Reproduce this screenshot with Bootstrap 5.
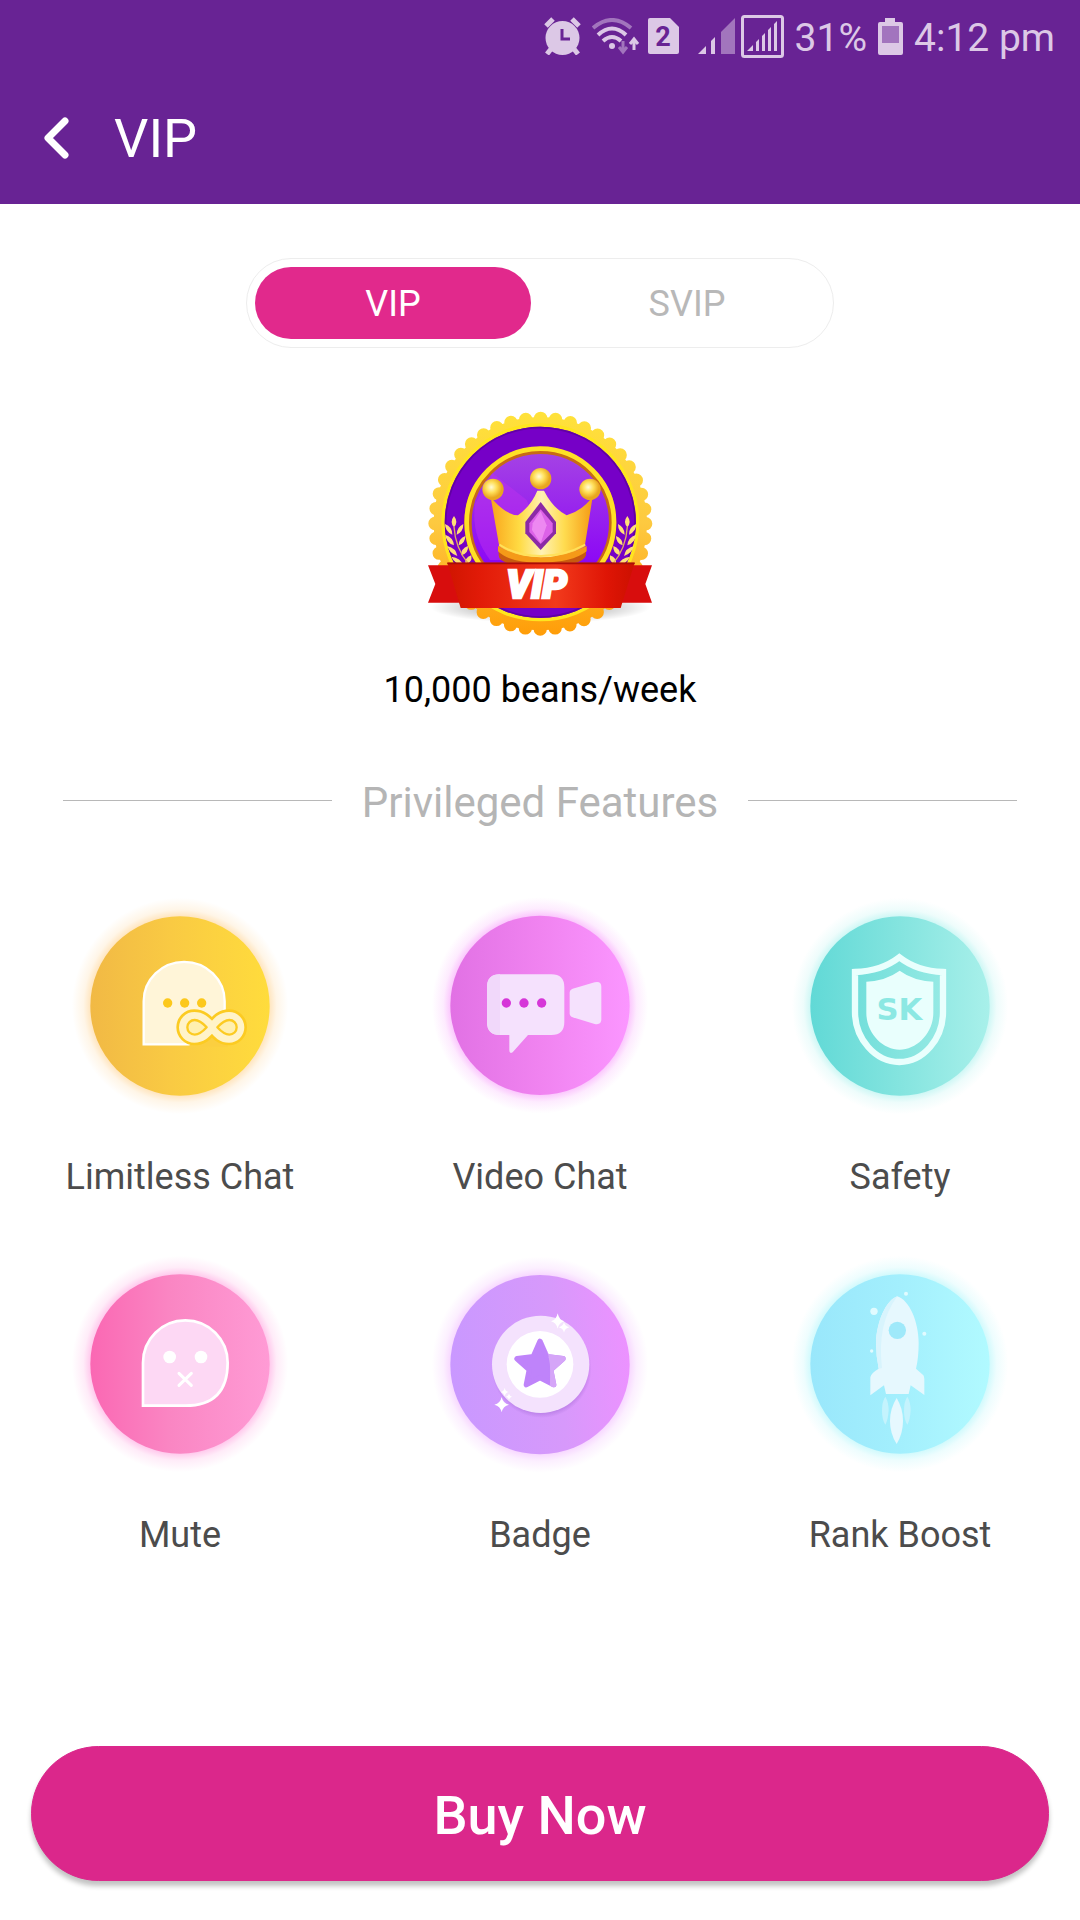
<!DOCTYPE html>
<html lang="en">
<head>
<meta charset="utf-8">
<meta name="viewport" content="width=device-width, initial-scale=1">
<title>VIP</title>
<link href="https://cdn.jsdelivr.net/npm/bootstrap@5.3.0/dist/css/bootstrap.min.css" rel="stylesheet">
<style>
  body { font-family: Roboto, "Liberation Sans", sans-serif; background: #fff; color: #000; }
  svg { display: block; flex: none; }
  .app-top { background: #682394; color: #fff; }
  .status-row { height: 72px; padding-right: 25px; gap: 11px; color: #dcc8e6; font-size: 39px; line-height: 48px; }
  .status-pair { gap: 6px; }
  .title-row { height: 132px; padding-left: 43px; gap: 43px; }
  .title-row h1 { padding-top: 2px; font-size: 54px; line-height: 64px; font-weight: 400; }
  .plan-switch { width: 588px; max-width: 100%; margin-top: 54px; padding: 8px; gap: 18px; border: 1px solid #ededed; border-radius: 45px; }
  .plan-switch .nav-link { height: 72px; padding: 0; border-radius: 36px; font-size: 36px; line-height: 74px; color: #b8b8b8; }
  .plan-switch .nav-link.active { background: #e1298c; color: #fff; }
  .vip-seal { margin-top: 52px; }
  .price { margin-top: 16px; font-size: 36px; line-height: 48px; }
  .divider { margin: 58px 0; padding: 0 63px; gap: 30px; }
  .divider h2 { padding-top: 6px; font-size: 42px; line-height: 50px; font-weight: 400; color: #b5b5b5; }
  .rule-line { height: 1px; background: #b8b8b8; }
  .features { row-gap: 43px; }
  .feature-name { margin-top: 27px; font-size: 36px; line-height: 48px; color: #4c4c4c; }
  .buy-area { padding: 48px 31px 39px; }
  .btn-buy { height: 135px; padding: 4px 0 0; border-radius: 68px; font-size: 54px; line-height: 64px; font-weight: 500; box-shadow: 0 5px 5px rgba(0,0,0,.24);
    --bs-btn-color: #fff; --bs-btn-bg: #db278b; --bs-btn-border-color: #db278b; --bs-btn-hover-color: #fff; --bs-btn-hover-bg: #c5207b; --bs-btn-hover-border-color: #c5207b; --bs-btn-active-color: #fff; --bs-btn-active-bg: #c5207b; }
</style>
<script src="https://cdn.jsdelivr.net/npm/bootstrap@5.3.0/dist/js/bootstrap.bundle.min.js" defer></script>
</head>
<body>
<div class="d-flex flex-column min-vh-100">

  <header class="app-top">
    <div class="status-row d-flex align-items-center justify-content-end">
      <svg width="37" height="38" viewBox="0 0 37 38" fill="currentColor" aria-hidden="true">
        <path d="M7 32l-4 5M30 32l4 5M2 9l7-7M35 9l-7-7" stroke="currentColor" stroke-width="5"/>
        <circle cx="18.500" cy="21" r="17"/>
        <path d="M18 12v10h8" fill="none" stroke="#682394" stroke-width="3"/>
      </svg>
      <div class="status-pair d-flex align-items-center me-2">
        <svg width="50" height="37" viewBox="0 0 50 37" fill="none" stroke="currentColor" stroke-width="4" aria-hidden="true">
          <path d="M1 10Q20-6 39 10" opacity=".5"/>
          <path d="M6 17Q20 4 34 17M11 23Q20 15 29 23"/>
          <circle cx="20" cy="28" r="3" fill="currentColor" stroke="none"/>
          <path d="M31 23v11M27 29l4 5 4-5" stroke-width="3" opacity=".5"/>
          <path d="M42 32V21M38 26l4-5 4 5" stroke-width="3"/>
        </svg>
        <svg width="31" height="36" viewBox="0 0 31 36" aria-hidden="true">
          <path d="M2 0h20l9 9v25q0 2-2 2H2q-2 0-2-2V2Q0 0 2 0z" fill="currentColor"/>
          <text x="15" y="28" text-anchor="middle" font-size="27" font-weight="700" fill="#682394">2</text>
        </svg>
      </div>
      <div class="status-pair d-flex align-items-center">
        <svg width="37" height="37" viewBox="0 0 37 37" fill="currentColor" aria-hidden="true">
          <path d="M0 36l8-8v8zM13 23l4-4v17h-4z"/>
          <path d="M23 14L37 0v36H23z" opacity=".5"/>
        </svg>
        <svg width="43" height="43" viewBox="0 0 43 43" fill="currentColor" aria-hidden="true">
          <rect x="1.500" y="1.500" width="40" height="40" rx="2" fill="none" stroke="currentColor" stroke-width="3"/>
          <path d="M6 36l6-6v6zM15 27l3-3v12h-3zM21 21l3-3v18h-3zM27 15l3-3v24h-3zM33 9l3-3v30h-3z"/>
        </svg>
      </div>
      <span class="pt-1">31%</span>
      <svg width="25" height="37" viewBox="0 0 25 37" aria-hidden="true">
        <path d="M2 4h5V0h10v4h6q2 0 2 2v29q0 2-2 2H2q-2 0-2-2V6Q0 4 2 4z" fill="currentColor"/>
        <path d="M4 8h17v17H4z" fill="#a274be"/>
      </svg>
      <span class="pt-1">4:12 pm</span>
    </div>
    <div class="title-row d-flex align-items-center">
      <button type="button" class="btn p-0 border-0 text-white" aria-label="Back">
        <svg width="28" height="44" viewBox="0 0 28 44" fill="none" stroke="currentColor" stroke-width="7" stroke-linecap="round" stroke-linejoin="round"><path d="M22 5L5 22l17 17"/></svg>
      </button>
      <h1 class="m-0">VIP</h1>
    </div>
  </header>

  <main class="flex-grow-1 d-flex flex-column align-items-center">
    <div class="plan-switch nav nav-pills nav-fill flex-nowrap" role="tablist">
      <button type="button" class="nav-link active w-50" role="tab" aria-selected="true">VIP</button>
      <button type="button" class="nav-link w-50" role="tab" aria-selected="false">SVIP</button>
    </div>

    <svg class="vip-seal" width="260" height="250" viewBox="0 0 780 750" role="img" aria-label="VIP seal">
      <defs>
        <linearGradient id="sealGold" gradientUnits="userSpaceOnUse" x1="0" y1="36" x2="0" y2="706"><stop offset="0" stop-color="#ffe23a"/><stop offset=".5" stop-color="#fdc940"/><stop offset="1" stop-color="#ff9d08"/></linearGradient>
        <linearGradient id="sealCore" x1="0" y1="0" x2="0" y2="1"><stop offset="0" stop-color="#a544e4"/><stop offset=".75" stop-color="#8d0af5"/><stop offset="1" stop-color="#6500bd"/></linearGradient>
        <linearGradient id="crownGold" x1="0" y1="0" x2="1" y2="0"><stop offset="0" stop-color="#f9a51c"/><stop offset=".28" stop-color="#ffdb43"/><stop offset=".5" stop-color="#fff2b4"/><stop offset=".72" stop-color="#ffdc50"/><stop offset="1" stop-color="#f59a14"/></linearGradient>
        <radialGradient id="pearl" cx=".42" cy=".4"><stop offset="0" stop-color="#fffbd6"/><stop offset=".5" stop-color="#ffdf59"/><stop offset="1" stop-color="#e9a61f"/></radialGradient>
        <linearGradient id="ribbonRed" x1="0" y1="0" x2="1" y2="0"><stop offset="0" stop-color="#d01500"/><stop offset=".18" stop-color="#e21b08"/><stop offset=".58" stop-color="#f23a1c"/><stop offset=".85" stop-color="#df1505"/><stop offset="1" stop-color="#cc1000"/></linearGradient>
        <radialGradient id="sealShade"><stop offset=".4" stop-color="#000" stop-opacity=".28"/><stop offset="1" stop-color="#000" stop-opacity="0"/></radialGradient>
        <g id="wheat" fill="#ffdf78">
          <path d="M132 348q-14 18 0 34 14-16 0-34zM105 372q0 22 22 32 0-24-22-32zM160 372q-20 10-20 32 20-8 20-32zM106 404q2 24 26 32-2-24-26-32zM166 408q-20 8-20 28 20-6 20-28zM112 438q6 22 30 30-4-24-30-30zM174 438q-22 8-20 28 22-6 20-28zM124 470q10 22 36 26-8-22-36-26zM184 466q-22 8-18 28 22-6 18-28z"/>
          <path d="M132 380q4 66 44 112" fill="none" stroke="#e5b15c" stroke-width="4"/>
        </g>
      </defs>
      <ellipse cx="391" cy="622" rx="330" ry="48" fill="url(#sealShade)"/>
      <circle cx="391" cy="371" r="320" fill="url(#sealGold)"/>
      <circle cx="391" cy="371" r="316" fill="none" stroke="url(#sealGold)" stroke-width="40" stroke-linecap="round" pathLength="44" stroke-dasharray="0 1"/>
      <circle cx="391" cy="367" r="292" fill="#7600c7" stroke="#ffe51f" stroke-width="10"/>
      <circle cx="391" cy="367" r="284" fill="none" stroke="#6200a4" stroke-width="5"/>
      <circle cx="391" cy="368" r="217" fill="url(#sealCore)" stroke="#c76b14" stroke-width="22"/>
      <circle cx="391" cy="367" r="221" fill="none" stroke="#ffe126" stroke-width="14"/>
      <path d="M196 310L248 220 350 300 420 480H240q-60-80-44-170z" fill="#c232ee" opacity=".45"/>
      <use href="#wheat"/><use href="#wheat" transform="translate(784 0) scale(-1 1)"/>
      <path d="M266 438q0 46 126 46t136-46v28q-10 34-136 34T266 466z" fill="#c85a10"/>
      <path d="M242 292Q286 344 324 346 364 316 382 272H402Q430 326 470 346 514 334 548 290L524 440Q466 474 392 474T268 440z" fill="url(#crownGold)"/>
      <path d="M264 438Q320 472 392 472T530 438v16q-44 34-138 34T264 454z" fill="#f59a18"/>
      <path d="M268 434Q320 468 392 468T526 434" fill="none" stroke="#ffe05a" stroke-width="6"/>
      <path d="M392 306l46 60v34l-46 50-46-50v-34z" fill="#8b2aa6"/>
      <path d="M392 328l36 42v26l-36 36-34-36v-26z" fill="#dc62e8"/>
      <path d="M392 334l18 42-18 54-26-40 2-20z" fill="#f395f4" opacity=".75"/>
      <circle cx="249" cy="268" r="32" fill="url(#pearl)"/><circle cx="392" cy="236" r="32" fill="url(#pearl)"/><circle cx="540" cy="268" r="32" fill="url(#pearl)"/>
      <path d="M54 496H160V608H54l22-56zM726 496H620V608H726l-20-56z" fill="#d80d0d"/>
      <path d="M116 490L152 620V550zM668 490l-38 130v-70z" fill="#8d0703"/>
      <path d="M112 488H674L632 624H152z" fill="url(#ribbonRed)"/>
      <path d="M112 490H674" stroke="#a80e08" stroke-width="5"/>
      <text x="380" y="595" text-anchor="middle" font-family="Roboto, sans-serif" font-size="116" font-weight="900" font-style="italic" fill="#fff" stroke="#fff" stroke-width="8">VIP</text>
    </svg>

    <p class="price mb-0">10,000 beans/week</p>

    <div class="divider d-flex align-items-center w-100">
      <span class="rule-line flex-fill"></span>
      <h2 class="m-0">Privileged Features</h2>
      <span class="rule-line flex-fill"></span>
    </div>

    <div class="features row g-0 w-100 text-center">
      <div class="feature-item col-4 d-flex flex-column align-items-center">
        <svg width="240" height="240" viewBox="0 -12 720 720" aria-hidden="true">
          <defs>
            <linearGradient id="disc1"><stop offset="0" stop-color="#f1b945"/><stop offset=".45" stop-color="#f9ca43"/><stop offset="1" stop-color="#ffdc3c"/></linearGradient>
            <radialGradient id="halo1"><stop offset=".76" stop-color="#ffb64a" stop-opacity=".42"/><stop offset=".84" stop-color="#ffb64a" stop-opacity=".13"/><stop offset=".94" stop-color="#ffb64a" stop-opacity="0"/></radialGradient>
          </defs>
          <circle cx="360" cy="348" r="345" fill="url(#halo1)"/>
          <circle cx="360" cy="348" r="269" fill="url(#disc1)"/>
          <path d="M251 463V334a121 118 0 0 1 243 0V463z" fill="#fff5d8" stroke="#fff" stroke-width="7"/>
          <path d="M384 470h120V370z" fill="#fbcf40"/>
          <g fill="#fcc81c"><circle cx="323" cy="339" r="14"/><circle cx="374" cy="339" r="14"/><circle cx="425" cy="339" r="14"/></g>
          <g fill="none" stroke-linejoin="round">
            <path d="M456 412C438 390 424 379 403 379a33 33 0 0 0 0 66C424 445 438 434 456 412 474 390 486 379 507 379a33 33 0 0 1 0 66C486 445 474 434 456 412z" stroke="#fccb22" stroke-width="42"/>
            <path d="M456 412C438 390 424 379 403 379a33 33 0 0 0 0 66C424 445 438 434 456 412 474 390 486 379 507 379a33 33 0 0 1 0 66C486 445 474 434 456 412z" stroke="#fff3c9" stroke-width="26"/>
            <path d="M440 412q-20-22-36-22a22 22 0 0 0 0 44q16 0 36-22zM472 412q20-22 36-22a22 22 0 0 1 0 44q-16 0-36-22z" fill="#fff0b0" stroke="#fccb22" stroke-width="7"/>
          </g>
        </svg>
        <div class="feature-name">Limitless Chat</div>
      </div>

      <div class="feature-item col-4 d-flex flex-column align-items-center">
        <svg width="240" height="240" viewBox="0 -12 720 720" aria-hidden="true">
          <defs>
            <linearGradient id="disc2"><stop offset="0" stop-color="#e171e4"/><stop offset=".5" stop-color="#f083f0"/><stop offset="1" stop-color="#fb96ff"/></linearGradient>
            <radialGradient id="halo2"><stop offset=".76" stop-color="#f468fa" stop-opacity=".44"/><stop offset=".84" stop-color="#f468fa" stop-opacity=".13"/><stop offset=".94" stop-color="#f468fa" stop-opacity="0"/></radialGradient>
          </defs>
          <circle cx="360" cy="346" r="345" fill="url(#halo2)"/>
          <circle cx="360" cy="346" r="269" fill="url(#disc2)"/>
          <path d="M240 253H394q39 0 39 39V396q0 39-39 39H324L278 487q-10 6-10-6V435H240q-39 0-39-39V292q0-39 39-39z" fill="#f5e1fd"/>
          <path d="M240 253q-39 0-39 39V396q0 39 39 39z" fill="#f1d8fa"/>
          <path d="M458 296L524 277q20-5 20 14V388q0 18-20 14L458 382q-9-3-9-12V308q0-9 9-12z" fill="#f5e1fd"/>
          <g fill="#d636d8"><circle cx="259" cy="339" r="14"/><circle cx="312" cy="339" r="14"/><circle cx="365" cy="339" r="14"/></g>
        </svg>
        <div class="feature-name">Video Chat</div>
      </div>

      <div class="feature-item col-4 d-flex flex-column align-items-center">
        <svg width="240" height="240" viewBox="0 -12 720 720" aria-hidden="true">
          <defs>
            <linearGradient id="disc3"><stop offset="0" stop-color="#61d9d6"/><stop offset=".5" stop-color="#84e4df"/><stop offset="1" stop-color="#a8f0ea"/></linearGradient>
            <radialGradient id="halo3"><stop offset=".76" stop-color="#7ceae4" stop-opacity=".44"/><stop offset=".84" stop-color="#7ceae4" stop-opacity=".13"/><stop offset=".94" stop-color="#7ceae4" stop-opacity="0"/></radialGradient>
          </defs>
          <circle cx="360" cy="348" r="345" fill="url(#halo3)"/>
          <circle cx="360" cy="348" r="269" fill="url(#disc3)"/>
          <path d="M358 202Q412 244 489 246V366C489 446 430 516 358 516S225 446 225 366V246Q304 244 358 202z" fill="none" stroke="#e9fffd" stroke-width="19"/>
          <path d="M359 242Q400 272 460 275V368C460 430 410 479 359 479S259 430 259 368V275Q318 272 359 242z" fill="#e9fffd"/>
          <text x="358" y="390" text-anchor="middle" font-family="'DejaVu Sans', sans-serif" font-size="92" font-weight="700" fill="#8ce8e3">SK</text>
        </svg>
        <div class="feature-name">Safety</div>
      </div>

      <div class="feature-item col-4 d-flex flex-column align-items-center">
        <svg width="240" height="240" viewBox="0 -20 720 720" aria-hidden="true">
          <defs>
            <linearGradient id="disc4"><stop offset="0" stop-color="#fa68b3"/><stop offset=".45" stop-color="#fa86c3"/><stop offset="1" stop-color="#ff9bd5"/></linearGradient>
            <radialGradient id="halo4"><stop offset=".76" stop-color="#ff5fc8" stop-opacity=".4"/><stop offset=".84" stop-color="#ff5fc8" stop-opacity=".12"/><stop offset=".94" stop-color="#ff5fc8" stop-opacity="0"/></radialGradient>
          </defs>
          <circle cx="360" cy="340" r="345" fill="url(#halo4)"/>
          <circle cx="360" cy="340" r="269" fill="url(#disc4)"/>
          <path d="M249 465V336a127 127 0 0 1 254 0q0 129-127 129z" fill="#fdd8f4" stroke="#fff" stroke-width="8"/>
          <g fill="#fff"><circle cx="329" cy="319" r="19"/><circle cx="423" cy="319" r="19"/></g>
          <path d="M357 368l37 36M394 368l-37 36" stroke="#fff" stroke-width="9" stroke-linecap="round"/>
        </svg>
        <div class="feature-name">Mute</div>
      </div>

      <div class="feature-item col-4 d-flex flex-column align-items-center">
        <svg width="240" height="240" viewBox="0 -20 720 720" aria-hidden="true">
          <defs>
            <linearGradient id="disc5" x1="0" y1=".55" x2="1" y2=".45"><stop offset="0" stop-color="#c998ff"/><stop offset=".6" stop-color="#d799fb"/><stop offset="1" stop-color="#ec92ff"/></linearGradient>
            <radialGradient id="halo5"><stop offset=".76" stop-color="#e98cff" stop-opacity=".4"/><stop offset=".84" stop-color="#e98cff" stop-opacity=".14"/><stop offset=".94" stop-color="#e98cff" stop-opacity="0"/></radialGradient>
            <radialGradient id="coinShade"><stop offset=".85" stop-color="#9b62cf" stop-opacity=".6"/><stop offset="1" stop-color="#9b62cf" stop-opacity="0"/></radialGradient>
            <clipPath id="starRight"><path d="M352 250Q402 300 388 420H450V250z"/></clipPath>
          </defs>
          <circle cx="360" cy="342" r="345" fill="url(#halo5)"/>
          <circle cx="360" cy="342" r="269" fill="url(#disc5)"/>
          <circle cx="365" cy="352" r="150" fill="url(#coinShade)"/>
          <circle cx="362" cy="341" r="146" fill="#f4e2fd"/>
          <circle cx="360" cy="341" r="100" fill="#fff"/>
          <g stroke-linejoin="round" stroke-width="16">
            <path d="M360 272l20 46 49 6-37 33 9 45-41-21-41 21 9-45-37-33 49-6z" fill="#bf83fa" stroke="#bf83fa"/>
            <path d="M360 272l20 46 49 6-37 33 9 45-41-21-41 21 9-45-37-33 49-6z" fill="#d5a5f8" stroke="#d5a5f8" clip-path="url(#starRight)"/>
          </g>
          <path d="M245 439q4 19 22 23-18 4-22 23-4-19-22-23 18-4 22-23zM413 188q4 20 20 24-16 4-20 22-4-18-20-22 16-4 20-24zM432 214q3 13 16 16-13 3-16 16-3-13-16-16 13-3 16-16zM254 411q2 11 12 13-10 2-12 13-2-11-12-13 10-2 12-13zM267 429q2 7 9 9-7 2-9 9-2-7-9-9 7-2 9-9z" fill="#fff"/>
        </svg>
        <div class="feature-name">Badge</div>
      </div>

      <div class="feature-item col-4 d-flex flex-column align-items-center">
        <svg width="240" height="240" viewBox="0 -20 720 720" aria-hidden="true">
          <defs>
            <linearGradient id="disc6"><stop offset="0" stop-color="#99e7fb"/><stop offset=".5" stop-color="#a3effd"/><stop offset="1" stop-color="#b1faff"/></linearGradient>
            <radialGradient id="halo6"><stop offset=".76" stop-color="#84f1f8" stop-opacity=".44"/><stop offset=".84" stop-color="#84f1f8" stop-opacity=".14"/><stop offset=".94" stop-color="#84f1f8" stop-opacity="0"/></radialGradient>
          </defs>
          <circle cx="360" cy="340" r="345" fill="url(#halo6)"/>
          <circle cx="360" cy="340" r="269" fill="url(#disc6)"/>
          <path d="M352 137C388 148 416 214 416 276Q416 320 408 354L426 370Q433 374 433 384V433L392 404 386 430H318L312 404 271 434V380Q272 368 296 354 288 314 288 276C290 214 318 148 352 137z" fill="#e6f8fe"/>
          <path d="M352 137C318 148 290 214 288 276Q288 314 296 354L306 352Q290 220 352 137z" fill="#d8f4fd"/>
          <circle cx="352" cy="239" r="26" fill="#9fe9fa"/>
          <path d="M316 438q10 16 10 42-2 28-10 42-10-16-10-42 0-28 10-42zM382 438q10 16 10 42-2 28-10 42-10-16-10-42 0-28 10-42z" fill="#c4f3fd"/>
          <path d="M350 442q19 32 19 68 0 38-19 70-20-32-20-70 0-36 20-68z" fill="#e6f8fe"/>
          <g fill="#e1fbff"><circle cx="282" cy="182" r="11"/><circle cx="378" cy="129" r="6"/><circle cx="433" cy="249" r="6"/><circle cx="275" cy="301" r="5"/></g>
        </svg>
        <div class="feature-name">Rank Boost</div>
      </div>
    </div>
  </main>

  <div class="buy-area">
    <button type="button" class="btn btn-buy w-100">Buy Now</button>
  </div>
</div>
</body>
</html>
